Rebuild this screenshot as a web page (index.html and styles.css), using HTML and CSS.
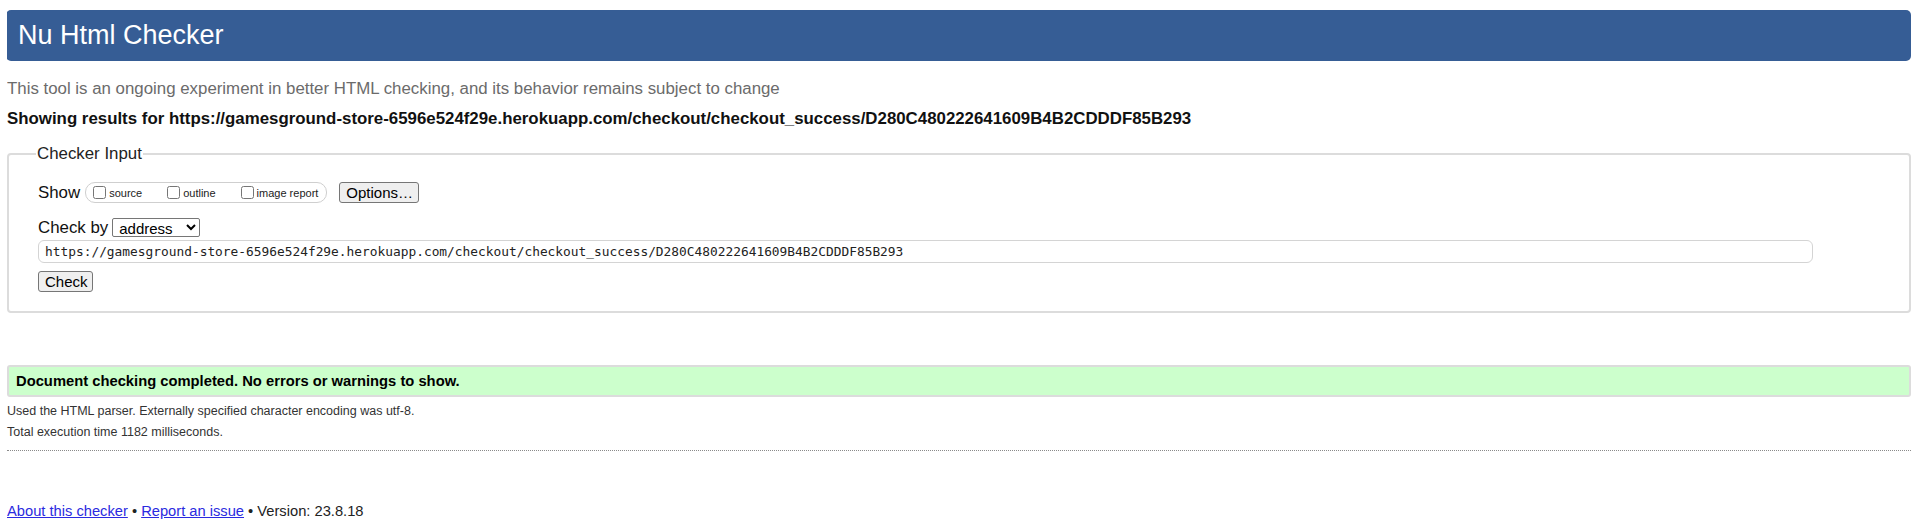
FILE: index.html
```html
<!DOCTYPE html>
<html lang="en">
<head>
<meta charset="utf-8">
<title>Showing results for https://gamesground-store-6596e524f29e.herokuapp.com/checkout/checkout_success/D280C480222641609B4B2CDDDF85B293 - Nu Html Checker</title>
<link rel="stylesheet" href="styles.css">
</head>
<body>
<h1 class="title">Nu Html Checker</h1>
<p class="tagline">This tool is an ongoing experiment in better HTML checking, and its behavior remains subject to change</p>
<p class="showing">Showing results for https://gamesground-store-6596e524f29e.herokuapp.com/checkout/checkout_success/D280C480222641609B4B2CDDDF85B293</p>
<form class="checker-form">
  <fieldset class="checker-input">
    <legend class="legend">Checker Input</legend>
    <div class="fields">
      <div class="row show-row">
        <span class="row-label">Show</span>
        <span class="show-opts">
          <label class="opt"><input type="checkbox" class="cb">source</label>
          <label class="opt"><input type="checkbox" class="cb">outline</label>
          <label class="opt"><input type="checkbox" class="cb">image report</label>
        </span>
        <button type="button" class="btn options-btn">Options…</button>
      </div>
      <div class="row by-row">
        <label class="row-label">Check by</label>
        <select class="select"><option>address</option><option>file upload</option><option>text input</option></select>
      </div>
      <div class="row url-row">
        <input type="url" class="url" value="https://gamesground-store-6596e524f29e.herokuapp.com/checkout/checkout_success/D280C480222641609B4B2CDDDF85B293">
      </div>
      <div class="row submit-row">
        <button type="submit" class="btn check-btn">Check</button>
      </div>
    </div>
  </fieldset>
</form>
<p class="success">Document checking completed. No errors or warnings to show.</p>
<p class="details first">Used the HTML parser. Externally specified character encoding was utf-8.</p>
<p class="details">Total execution time 1182 milliseconds.</p>
<hr class="sep">
<p class="footer"><a href="#" class="link">About this checker</a> • <a href="#" class="link">Report an issue</a> • Version: 23.8.18</p>
</body>
</html>
```
FILE: styles.css
```css
html {
  background: #fff;
}
body {
  margin: 10px 9px 0 7px;
  font-family: "Liberation Sans", Arial, sans-serif;
  font-size: 16.85px;
  color: #000;
}
.title {
  margin: 0 0 0 -1px;
  height: 51px;
  padding: 0 12px;
  line-height: 50px;
  font-size: 27px;
  font-weight: normal;
  color: #fff;
  background: #365d95;
  border-radius: 5px;
}
.tagline {
  margin: 18px 0 0;
  line-height: 20px;
  color: #6b6b6b;
}
.showing {
  margin: 10px 0 0;
  line-height: 20px;
  font-weight: bold;
  color: #111;
}
.checker-form {
  margin: 15px 0 0;
}
.checker-input {
  margin: 0;
  padding: 0 29px 19px 29px;
  border: 2px solid #dcdcdc;
  border-radius: 4px;
  min-width: 0;
}
.legend {
  margin-left: -2px;
  padding: 0 1px;
  line-height: 20px;
  color: #222;
}
.fields {
  display: flex;
  flex-direction: column;
  align-items: flex-start;
}
.row {
  display: flex;
  align-items: center;
  gap: 4px;
}
.row-label {
  line-height: 20px;
  color: #111;
}
.show-row {
  margin-top: 18px;
  height: 21px;
}
.show-opts {
  display: flex;
  align-items: center;
  gap: 21px;
  height: 19px;
  margin-left: 1px;
  padding: 0 8px 0 3px;
  border: 1px solid #cfcfcf;
  border-radius: 10px;
}
.opt {
  display: flex;
  align-items: center;
  font-size: 11px;
  color: #222;
}
.cb {
  width: 13px;
  height: 13px;
  margin: 0 3px 0 4px;
}
.btn {
  height: 21px;
  padding: 0 6px;
  font-family: "Liberation Sans", Arial, sans-serif;
  font-size: 15px;
  color: #000;
  background: #efefef;
  border: 1px solid #767676;
  border-radius: 3px;
}
.options-btn {
  margin-left: 8px;
  width: 80px;
}
.by-row {
  margin-top: 15px;
  height: 19px;
}
.select {
  width: 88px;
  height: 19px;
  padding: 0 2px;
  font-family: "Liberation Sans", Arial, sans-serif;
  font-size: 15px;
  color: #000;
  background: #fff;
  border: 1px solid #767676;
  border-radius: 2px;
}
.url-row {
  margin-top: 3px;
}
.url {
  box-sizing: border-box;
  width: 1775px;
  height: 23px;
  padding: 0 6px;
  font-family: "DejaVu Sans Mono", "Liberation Mono", monospace;
  font-size: 12.85px;
  color: #222;
  border: 1px solid #d4d4d4;
  border-radius: 6px;
  outline: none;
}
.submit-row {
  margin-top: 8px;
}
.check-btn {
  width: 55px;
}
.success {
  margin: 52px 0 0;
  height: 32px;
  box-sizing: border-box;
  padding: 0 7px;
  line-height: 29px;
  font-size: 14.75px;
  font-weight: bold;
  color: #000;
  background: #ccffcc;
  border: 2px solid #dcdcdc;
  border-radius: 3px;
}
.details {
  margin: 0;
  line-height: 21px;
  font-size: 12.5px;
  color: #333;
}
.details.first {
  margin-top: 4px;
}
.sep {
  margin: 7px 0 0;
  height: 0;
  border: 0;
  border-top: 1px dotted #8a8a8a;
}
.footer {
  margin: 50px 0 0;
  line-height: 20px;
  font-size: 14.7px;
  color: #222;
}
.link {
  color: #2a2ae0;
}
```
